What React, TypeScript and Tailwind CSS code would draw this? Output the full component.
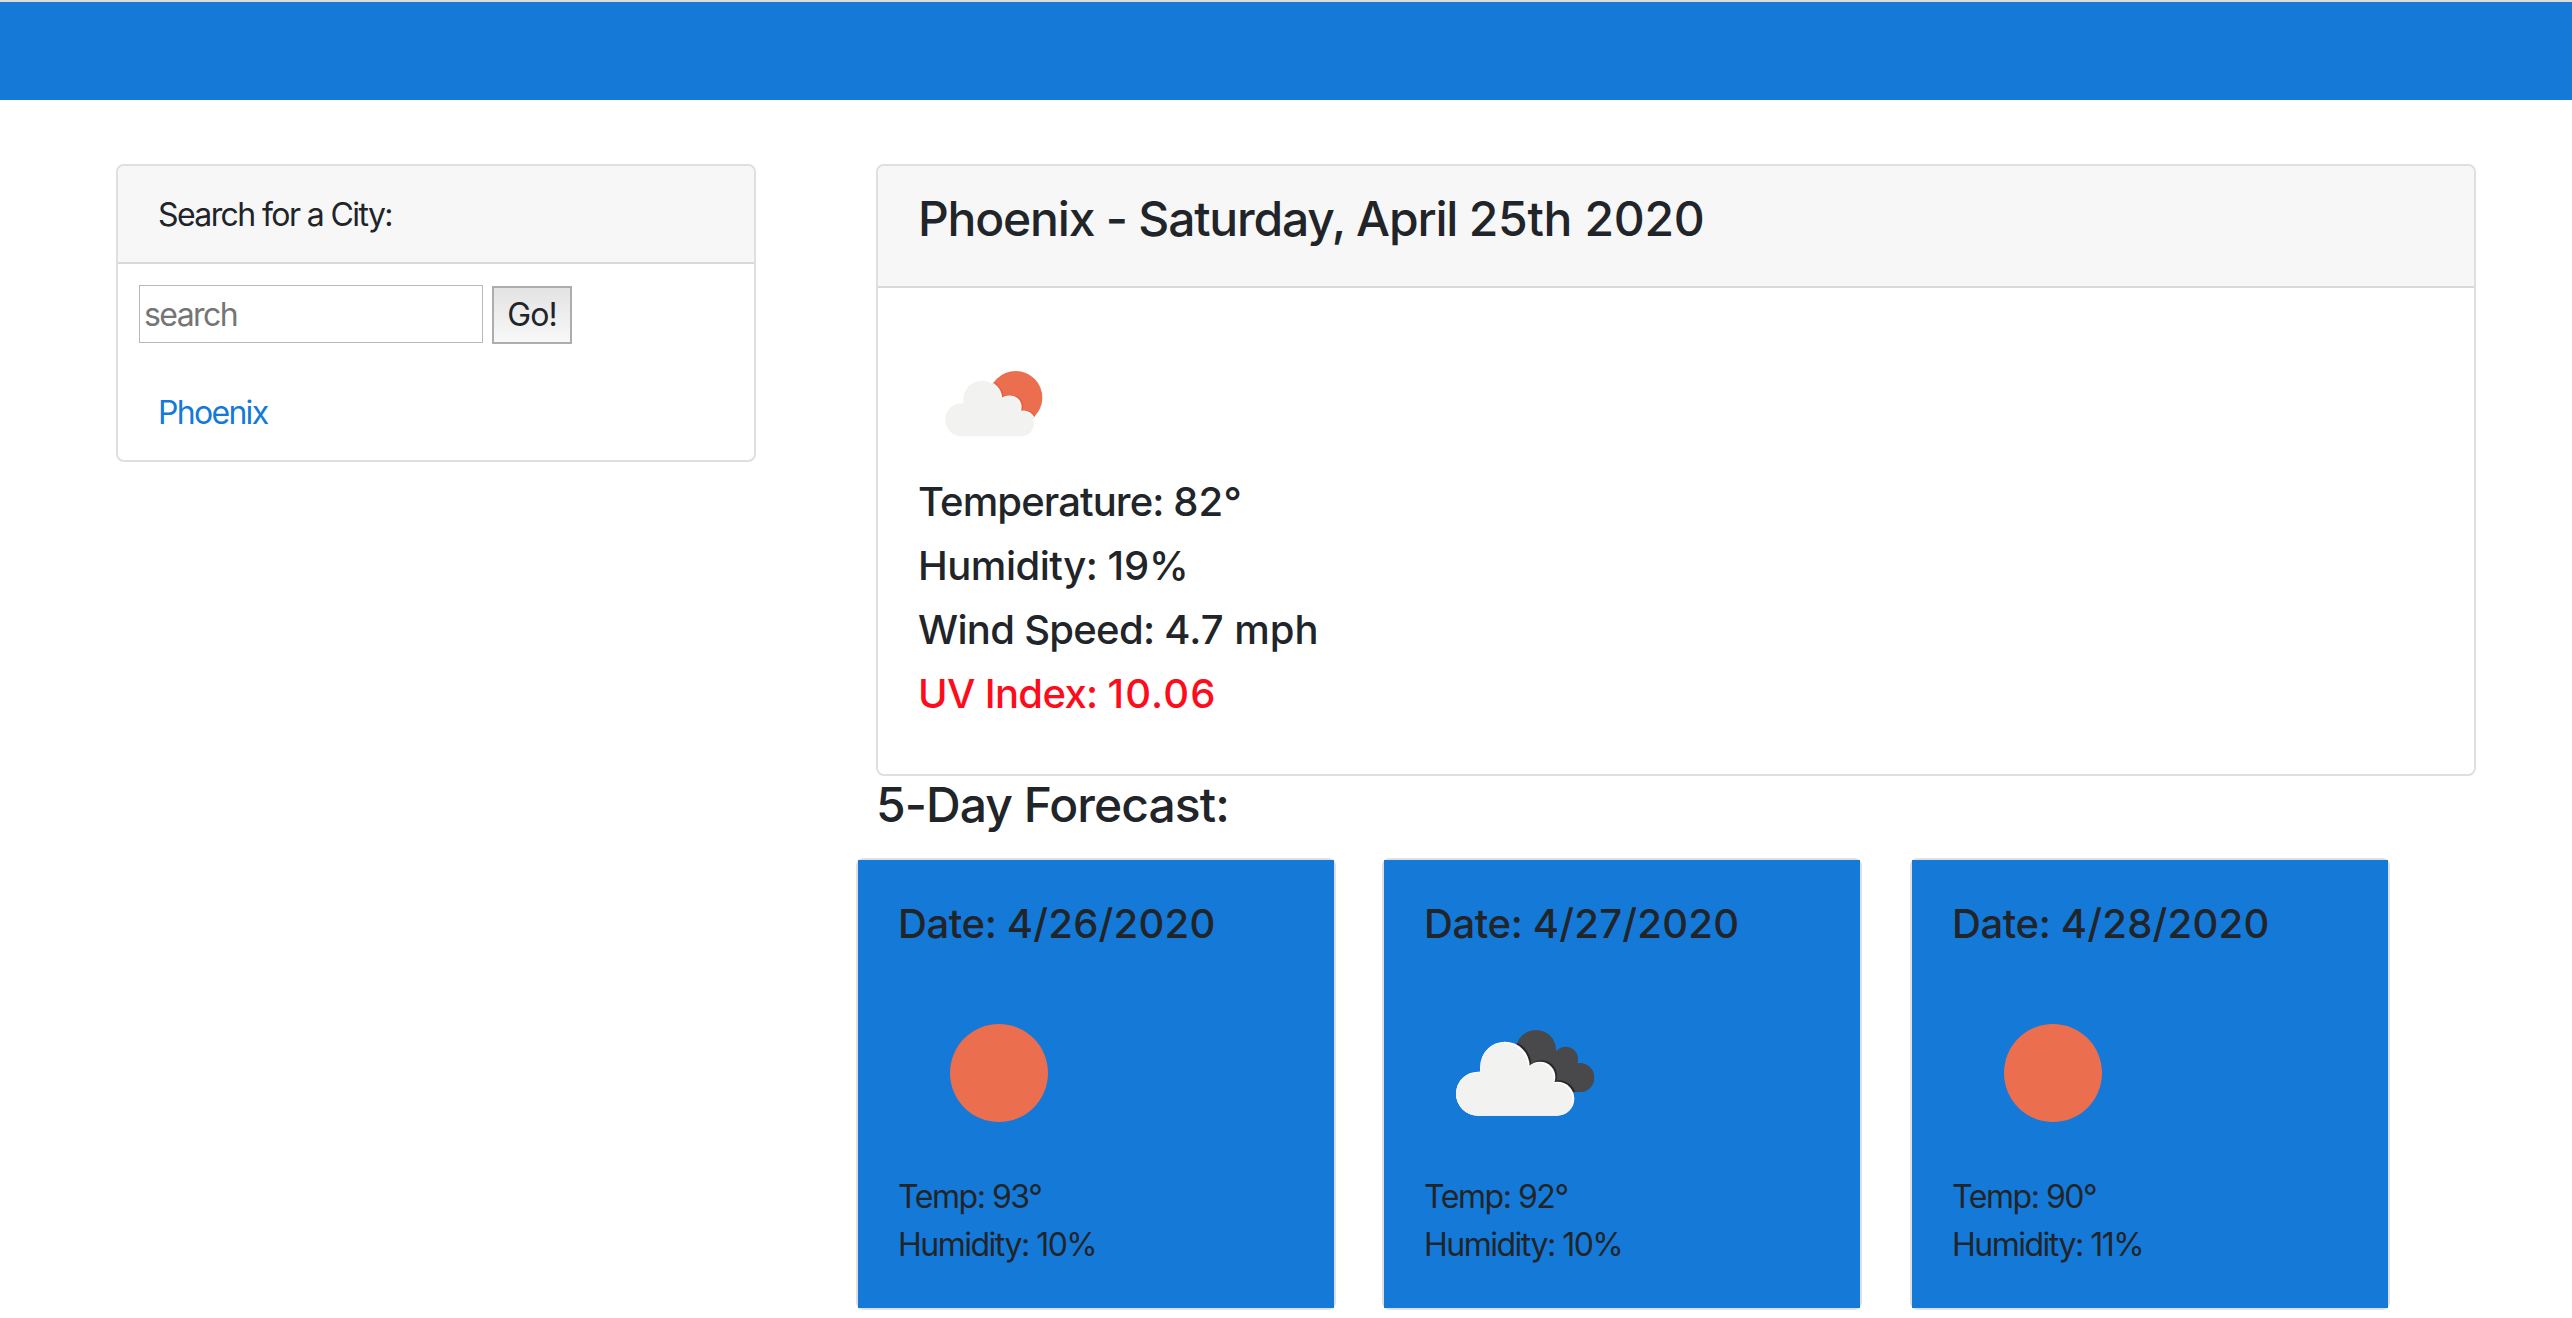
const Sun = () => (
  <svg viewBox="0 0 200 200" className="h-[200px] w-[200px]">
    <circle cx="101" cy="99" r="49" fill="#eb6e4f" />
  </svg>
);

// Front cloud of both cloudy icons: four lobes over a filled base.
const Cloud = () => (
  <>
    <circle cx="324" cy="311" r="66" />
    <circle cx="405" cy="229" r="74" />
    <circle cx="510" cy="261" r="46" />
    <circle cx="562" cy="326" r="51" />
    <path d="M324 377 L331 229 H405 L510 261 L562 326 V377Z" />
  </>
);

const BrokenClouds = () => (
  <svg viewBox="162 -48 600 600" className="h-[200px] w-[200px]">
    <defs>
      <clipPath id="back-cloud">
        <circle cx="498" cy="180" r="60" />
        <circle cx="587" cy="207" r="37" />
        <circle cx="629" cy="263" r="44" />
        <path d="M498 180 L587 207 L629 263 V307 H570 L470 260Z" />
      </clipPath>
      <clipPath id="front-cloud">
        <Cloud />
      </clipPath>
    </defs>
    <g clipPath="url(#back-cloud)">
      <rect x="400" y="100" width="300" height="220" fill="#49494b" />
      <g fill="#29292b" transform="translate(5 -4)"><Cloud /></g>
    </g>
    <g fill="#ffffff"><Cloud /></g>
    <g clipPath="url(#front-cloud)">
      <g fill="#f2f2f0" transform="translate(-5 4)"><Cloud /></g>
      <path d="M250 300 H400 V378 H250Z M400 300 H540 V378 H400Z" fill="#f2f2f0" />
    </g>
  </svg>
);

const FewClouds = () => (
  <svg viewBox="-21 -66 450 450" className="h-[150px] w-[150px]">
    <defs>
      <clipPath id="sun-disc">
        <circle cx="272" cy="143" r="80" />
      </clipPath>
    </defs>
    <circle cx="272" cy="143" r="80" fill="#eb6e4f" />
    <g clipPath="url(#sun-disc)">
      <g fill="#ea5f40" transform="translate(-125 -28) scale(0.755)"><Cloud /></g>
      <g fill="#f8f8f7" transform="translate(-130 -26) scale(0.755)"><Cloud /></g>
    </g>
    <g fill="#f2f2f0" transform="translate(-133 -24) scale(0.75)"><Cloud /></g>
  </svg>
);

const forecast = [
  { date: '4/26/2020', temp: 93, humidity: 10, icon: <Sun /> },
  { date: '4/27/2020', temp: 92, humidity: 10, icon: <BrokenClouds /> },
  { date: '4/28/2020', temp: 90, humidity: 11, icon: <Sun /> },
];

export default function App() {
  return (
    <div className="h-[1318px] w-[2572px] overflow-hidden bg-white font-['Inter',sans-serif] text-[32px] leading-[48px] text-[#212529]">
      <header className="h-[100px] border-t-2 border-[#dcdcdc] bg-[#1479d7]" />
      <main className="flex items-start pt-16 pl-[116px]">
        <aside className="w-[640px] rounded-lg border-2 border-[#dfdfdf]">
          <div className="h-[98px] rounded-t-md border-b-2 border-[#d9d9d9] bg-[#f7f7f7] px-10 pt-[25px] tracking-[-1.6px]">Search for a City:</div>
          <form className="flex gap-[9px] pt-[21px] pl-[21px]">
            <input placeholder="search" className="h-[58px] w-[344px] border border-[#b8b8b8] px-1 tracking-[-1.6px] placeholder:text-[#757575]" />
            <button type="button" className="mt-px h-[58px] w-20 border-2 border-[#adadad] bg-gradient-to-b from-[#e3e3e3] to-[#f8f8f8] tracking-[-1px]">Go!</button>
          </form>
          <div className="h-[116px] px-10 pt-[45px] tracking-[-1.7px] text-[#1479d7]">Phoenix</div>
        </aside>
        <section className="ml-[120px] w-[1600px]">
          <div className="h-[612px] rounded-lg border-2 border-[#dfdfdf]">
            <div className="h-[122px] rounded-t-md border-b-2 border-[#d9d9d9] bg-[#f7f7f7] px-10 pt-6">
              <h2 className="text-[48px] leading-[58px] font-medium tracking-[-1.2px]">
                Phoenix - Saturday, April <span className="tracking-[-0.3px]">25th 2020</span>
              </h2>
            </div>
            <div className="px-10 pt-10 text-[40px] leading-[48px] font-medium">
              <div className="h-[150px]"><FewClouds /></div>
              <div className="flex flex-col gap-4">
                <p className="tracking-[-0.9px]">Temperature: <span className="tracking-[0.2px]">82°</span></p>
                <p className="tracking-[-0.5px]">Humidity: <span className="tracking-[-0.1px]">19%</span></p>
                <p className="tracking-[-0.7px]">Wind Speed: <span className="tracking-[0px]">4.7 mph</span></p>
                <p className="tracking-[-0.65px] text-[#fd0d1b]">UV Index: <span className="tracking-[1.1px]">10.06</span></p>
              </div>
            </div>
          </div>
          <h2 className="text-[48px] leading-[58px] font-medium tracking-[-0.95px]">5-Day Forecast:</h2>
          <div className="mt-6 -ml-5 grid grid-cols-[526px_528px_480px]">
            {forecast.map((day) => (
              <article key={day.date} className="h-[452px] w-[480px] rounded-lg border-2 border-[#dfdfdf]">
                <div className="h-full bg-[#1479d7] px-10 pt-10">
                  <h3 className="text-[40px] leading-[48px] font-medium tracking-[-0.4px]">Date: <span className="tracking-[0.25px]">{day.date}</span></h3>
                  <div className="mt-[26px] h-[199px]">{day.icon}</div>
                  <p className="tracking-[-1.45px]">Temp: {day.temp}°</p>
                  <p className="tracking-[-1.5px]">Humidity: {day.humidity}%</p>
                </div>
              </article>
            ))}
          </div>
        </section>
      </main>
    </div>
  );
}
